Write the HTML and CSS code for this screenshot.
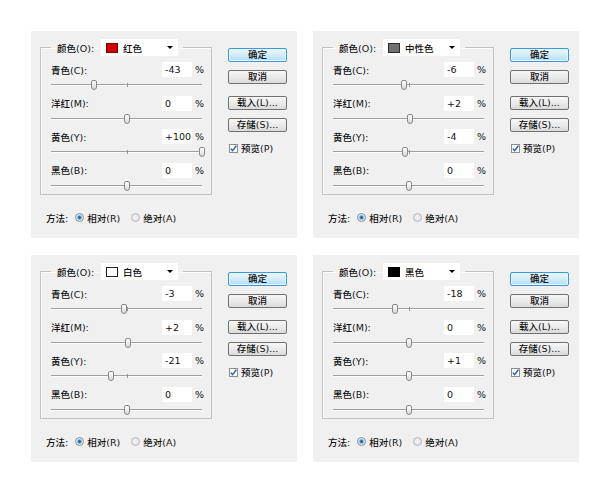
FILE: index.html
```html
<!DOCTYPE html>
<html lang="zh-CN">
<head>
  <meta charset="UTF-8">
  <title>可选颜色</title>
  <link rel="stylesheet" href="styles.css">
</head>
<body>
  <div class="sheet">

    <!-- 红色 -->
    <div class="dialog">
      <div class="main">
        <fieldset class="group">
          <legend class="group-title">
            <span class="title-label">颜色(O):</span>
            <span class="select"><span class="swatch red"></span><span class="select-text">红色</span><span class="caret"></span></span>
          </legend>
          <div class="row">
            <div class="row-head"><span class="row-label">青色(C):</span><span class="num">-43</span><span class="pct">%</span></div>
            <div class="slider"><span class="thumb" style="left: 28.5%"></span></div>
          </div>
          <div class="row">
            <div class="row-head"><span class="row-label">洋红(M):</span><span class="num">0</span><span class="pct">%</span></div>
            <div class="slider"><span class="thumb" style="left: 50%"></span></div>
          </div>
          <div class="row">
            <div class="row-head"><span class="row-label">黄色(Y):</span><span class="num">+100</span><span class="pct">%</span></div>
            <div class="slider"><span class="thumb" style="left: 100%"></span></div>
          </div>
          <div class="row">
            <div class="row-head"><span class="row-label">黑色(B):</span><span class="num">0</span><span class="pct">%</span></div>
            <div class="slider"><span class="thumb" style="left: 50%"></span></div>
          </div>
        </fieldset>
        <div class="method">
          <span>方法:</span>
          <span class="radio checked"></span><span>相对(R)</span>
          <span class="radio"></span><span>绝对(A)</span>
        </div>
      </div>
      <div class="buttons">
        <div class="btn default">确定</div>
        <div class="btn">取消</div>
        <div class="btn gap">载入(L)...</div>
        <div class="btn">存储(S)...</div>
        <div class="preview"><span class="check"><svg viewBox="0 0 9 9" width="9" height="9"><path d="M1.8 4.6 L3.6 6.6 L7.4 1.8" fill="none" stroke="#1f5fae" stroke-width="1.4"/></svg></span>预览(P)</div>
      </div>
    </div>

    <!-- 中性色 -->
    <div class="dialog">
      <div class="main">
        <fieldset class="group">
          <legend class="group-title">
            <span class="title-label">颜色(O):</span>
            <span class="select"><span class="swatch gray"></span><span class="select-text">中性色</span><span class="caret"></span></span>
          </legend>
          <div class="row">
            <div class="row-head"><span class="row-label">青色(C):</span><span class="num">-6</span><span class="pct">%</span></div>
            <div class="slider"><span class="thumb" style="left: 47%"></span></div>
          </div>
          <div class="row">
            <div class="row-head"><span class="row-label">洋红(M):</span><span class="num">+2</span><span class="pct">%</span></div>
            <div class="slider"><span class="thumb" style="left: 51%"></span></div>
          </div>
          <div class="row">
            <div class="row-head"><span class="row-label">黄色(Y):</span><span class="num">-4</span><span class="pct">%</span></div>
            <div class="slider"><span class="thumb" style="left: 48%"></span></div>
          </div>
          <div class="row">
            <div class="row-head"><span class="row-label">黑色(B):</span><span class="num">0</span><span class="pct">%</span></div>
            <div class="slider"><span class="thumb" style="left: 50%"></span></div>
          </div>
        </fieldset>
        <div class="method">
          <span>方法:</span>
          <span class="radio checked"></span><span>相对(R)</span>
          <span class="radio"></span><span>绝对(A)</span>
        </div>
      </div>
      <div class="buttons">
        <div class="btn default">确定</div>
        <div class="btn">取消</div>
        <div class="btn gap">载入(L)...</div>
        <div class="btn">存储(S)...</div>
        <div class="preview"><span class="check"><svg viewBox="0 0 9 9" width="9" height="9"><path d="M1.8 4.6 L3.6 6.6 L7.4 1.8" fill="none" stroke="#1f5fae" stroke-width="1.4"/></svg></span>预览(P)</div>
      </div>
    </div>

    <!-- 白色 -->
    <div class="dialog">
      <div class="main">
        <fieldset class="group">
          <legend class="group-title">
            <span class="title-label">颜色(O):</span>
            <span class="select"><span class="swatch white"></span><span class="select-text">白色</span><span class="caret"></span></span>
          </legend>
          <div class="row">
            <div class="row-head"><span class="row-label">青色(C):</span><span class="num">-3</span><span class="pct">%</span></div>
            <div class="slider"><span class="thumb" style="left: 48.5%"></span></div>
          </div>
          <div class="row">
            <div class="row-head"><span class="row-label">洋红(M):</span><span class="num">+2</span><span class="pct">%</span></div>
            <div class="slider"><span class="thumb" style="left: 51%"></span></div>
          </div>
          <div class="row">
            <div class="row-head"><span class="row-label">黄色(Y):</span><span class="num">-21</span><span class="pct">%</span></div>
            <div class="slider"><span class="thumb" style="left: 39.5%"></span></div>
          </div>
          <div class="row">
            <div class="row-head"><span class="row-label">黑色(B):</span><span class="num">0</span><span class="pct">%</span></div>
            <div class="slider"><span class="thumb" style="left: 50%"></span></div>
          </div>
        </fieldset>
        <div class="method">
          <span>方法:</span>
          <span class="radio checked"></span><span>相对(R)</span>
          <span class="radio"></span><span>绝对(A)</span>
        </div>
      </div>
      <div class="buttons">
        <div class="btn default">确定</div>
        <div class="btn">取消</div>
        <div class="btn gap">载入(L)...</div>
        <div class="btn">存储(S)...</div>
        <div class="preview"><span class="check"><svg viewBox="0 0 9 9" width="9" height="9"><path d="M1.8 4.6 L3.6 6.6 L7.4 1.8" fill="none" stroke="#1f5fae" stroke-width="1.4"/></svg></span>预览(P)</div>
      </div>
    </div>

    <!-- 黑色 -->
    <div class="dialog">
      <div class="main">
        <fieldset class="group">
          <legend class="group-title">
            <span class="title-label">颜色(O):</span>
            <span class="select"><span class="swatch black"></span><span class="select-text">黑色</span><span class="caret"></span></span>
          </legend>
          <div class="row">
            <div class="row-head"><span class="row-label">青色(C):</span><span class="num">-18</span><span class="pct">%</span></div>
            <div class="slider"><span class="thumb" style="left: 41%"></span></div>
          </div>
          <div class="row">
            <div class="row-head"><span class="row-label">洋红(M):</span><span class="num">0</span><span class="pct">%</span></div>
            <div class="slider"><span class="thumb" style="left: 50%"></span></div>
          </div>
          <div class="row">
            <div class="row-head"><span class="row-label">黄色(Y):</span><span class="num">+1</span><span class="pct">%</span></div>
            <div class="slider"><span class="thumb" style="left: 50.5%"></span></div>
          </div>
          <div class="row">
            <div class="row-head"><span class="row-label">黑色(B):</span><span class="num">0</span><span class="pct">%</span></div>
            <div class="slider"><span class="thumb" style="left: 50%"></span></div>
          </div>
        </fieldset>
        <div class="method">
          <span>方法:</span>
          <span class="radio checked"></span><span>相对(R)</span>
          <span class="radio"></span><span>绝对(A)</span>
        </div>
      </div>
      <div class="buttons">
        <div class="btn default">确定</div>
        <div class="btn">取消</div>
        <div class="btn gap">载入(L)...</div>
        <div class="btn">存储(S)...</div>
        <div class="preview"><span class="check"><svg viewBox="0 0 9 9" width="9" height="9"><path d="M1.8 4.6 L3.6 6.6 L7.4 1.8" fill="none" stroke="#1f5fae" stroke-width="1.4"/></svg></span>预览(P)</div>
      </div>
    </div>

  </div>
</body>
</html>
```

FILE: styles.css
```css
/* Page */
body {
  margin: 0;
  background-color: #ffffff;
  font-family: "DejaVu Sans", "Noto Sans CJK SC", sans-serif;
  font-size: 9.5px;
  font-weight: 500;
  color: #111111;
}

.sheet {
  display: grid;
  grid-template-columns: 266px 266px;
  grid-auto-rows: 207px;
  column-gap: 16px;
  row-gap: 17px;
  padding: 31px 0 0 31px;
}

/* Dialog panel */
.dialog {
  display: flex;
  gap: 16px;
  padding: 8px 0 0 9px;
  background-color: #f0f0f0;
}

.main {
  width: 172px;
}

/* Group box */
.group {
  margin: 0;
  padding: 6px 8px 0 10px;
  border: 1px solid #c2c2c2;
  box-shadow: inset 1px 1px 0 #fbfbfb;
  display: flex;
  flex-direction: column;
  gap: 2.67px;
}

.group-title {
  display: flex;
  align-items: center;
  gap: 7px;
  padding: 0 5px 0 6px;
}

.select {
  display: flex;
  align-items: center;
  width: 77px;
  height: 17px;
  box-sizing: border-box;
  padding: 0 5px;
  background-color: #ffffff;
}

.swatch {
  width: 12px;
  height: 10px;
  box-sizing: border-box;
  border: 1px solid #333;
  margin-right: 5px;
}

.swatch.red { background-color: #d40000; border-color: #7a0000; }
.swatch.gray { background-color: #707070; border-color: #2c2c2c; }
.swatch.white { background-color: #ffffff; border-color: #222; }
.swatch.black { background-color: #000000; border-color: #000; }

.select-text {
  flex: 1;
}

.caret {
  width: 0;
  height: 0;
  border-left: 3px solid transparent;
  border-right: 3px solid transparent;
  border-top: 3px solid #000;
}

/* Slider rows */
.row-head {
  display: flex;
  align-items: center;
  height: 15px;
}

.row-label {
  flex: 1;
}

.num {
  width: 30px;
  height: 15px;
  line-height: 15px;
  box-sizing: border-box;
  padding-left: 3px;
  background-color: #ffffff;
}

.pct {
  width: 8px;
  margin-left: 3px;
  text-align: right;
}

.slider {
  position: relative;
  height: 16px;
  margin-right: 1px;
}

.slider::before {
  content: "";
  position: absolute;
  left: 0;
  right: 0;
  top: 7px;
  height: 1px;
  background-color: #a0a0a0;
  box-shadow: 0 1px 0 #fdfdfd;
}

.slider::after {
  content: "";
  position: absolute;
  left: 50%;
  top: 6px;
  width: 1px;
  height: 4px;
  background-color: #959595;
}

.thumb {
  position: absolute;
  top: 3px;
  width: 6px;
  height: 10px;
  margin-left: -3px;
  box-sizing: border-box;
  border: 1px solid #888888;
  border-radius: 2px 2px 3px 3px;
  background: linear-gradient(#ffffff, #d8d8d8);
  z-index: 1;
}

/* Method radios */
.method {
  display: flex;
  align-items: center;
  height: 14px;
  margin-top: 16px;
  padding-left: 6px;
}

.radio {
  width: 9px;
  height: 9px;
  box-sizing: border-box;
  border: 1px solid #b9b9b9;
  border-radius: 50%;
  background: radial-gradient(circle, #f4f4f4, #dcdcdc);
  margin: 0 3px 0 8px;
}

.radio.checked {
  border-color: #8c8c8c;
  background: radial-gradient(circle, #1d5f9e 0, #3a8ed0 1.6px, #d9e9f5 2.6px, #eef3f7 4px);
  margin-left: 7px;
}

.radio + span + .radio {
  margin-left: 11px;
}

/* Buttons */
.buttons {
  display: flex;
  flex-direction: column;
  width: 59px;
  padding-top: 9px;
}

.btn {
  height: 14px;
  line-height: 12px;
  box-sizing: border-box;
  margin-bottom: 8px;
  border: 1px solid #717171;
  border-radius: 2px;
  background: linear-gradient(#f7f7f7 0%, #ebebeb 50%, #dadada 100%);
  text-align: center;
}

.btn.default {
  border-color: #3a9ad6;
  background: linear-gradient(#ecf7fd 0%, #d3ecfa 50%, #b4ddf5 100%);
  box-shadow: inset 0 0 0 1px #e6f5fd;
}

.btn.gap {
  margin-top: 4px;
}

.preview {
  display: flex;
  align-items: center;
  gap: 3px;
  height: 14px;
  margin-top: 1px;
  padding-left: 1px;
}

.check {
  display: flex;
  width: 9px;
  height: 9px;
  box-sizing: border-box;
  border: 1px solid #8e8e8e;
  background-color: #ffffff;
}

.check svg {
  margin: -1px;
}
```
